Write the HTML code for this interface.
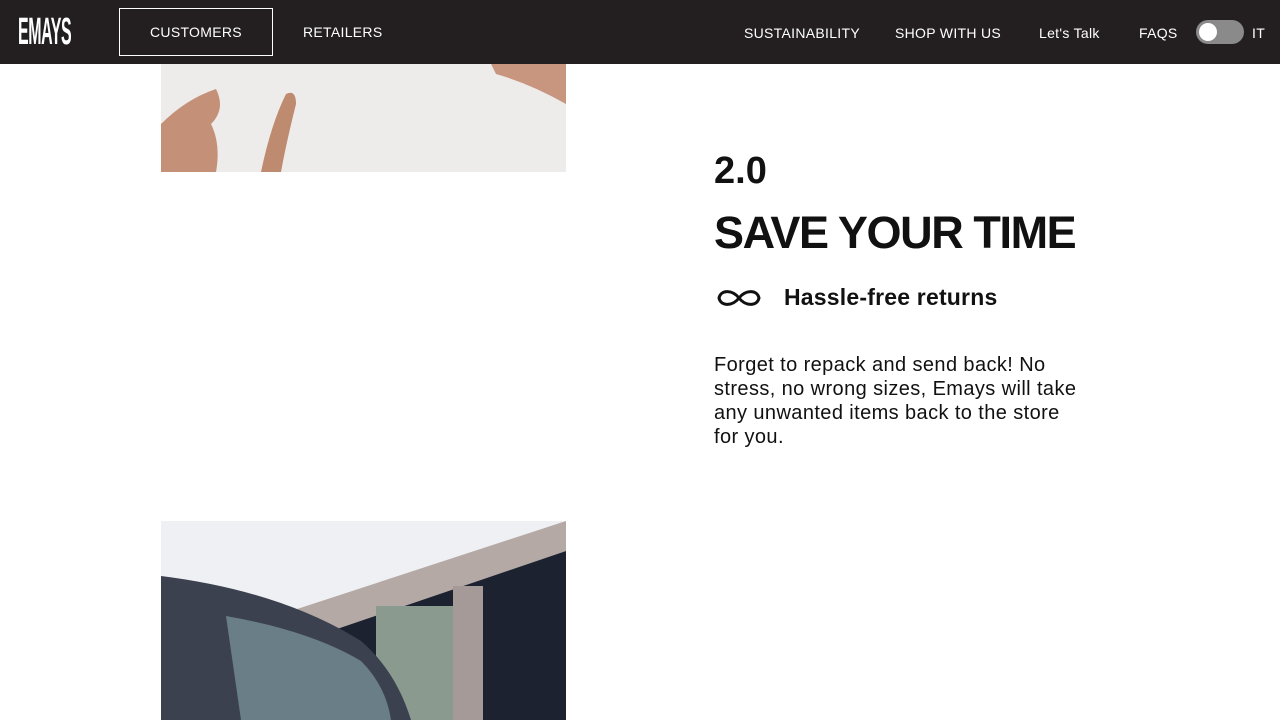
<!DOCTYPE html>
<html><head><meta charset="utf-8"><style>
*{margin:0;padding:0;box-sizing:border-box}
body{width:1280px;height:720px;overflow:hidden;background:#fff;font-family:"Liberation Sans",sans-serif;position:relative}
.nav{position:absolute;left:0;top:0;width:1280px;height:64px;background:#231f20;color:#fff}
.nav span{position:absolute;font-size:14px;top:24px;letter-spacing:0.3px}
.logo{position:absolute;left:18px;top:12px;font-size:38px;font-weight:bold;transform:scaleX(0.42);transform-origin:left;letter-spacing:-1px;line-height:40px}
.box{position:absolute;left:119px;top:8px;width:154px;height:48px;border:1px solid #fff}
.tog{position:absolute;left:1196px;top:20px;width:48px;height:24px;border-radius:12px;background:#8a8a8a}
.tog i{position:absolute;left:3px;top:3px;width:18px;height:18px;border-radius:50%;background:#fff}
.t{position:absolute;color:#111}
</style></head><body>
<div class="nav">
<div class="logo">EMAYS</div>
<div class="box"></div>
<span style="left:150px;top:24px">CUSTOMERS</span>
<span style="left:303px;top:24px">RETAILERS</span>
<span style="left:744px;top:25px">SUSTAINABILITY</span>
<span style="left:895px;top:25px">SHOP WITH US</span>
<span style="left:1039px;top:25px">Let's Talk</span>
<span style="left:1139px;top:25px">FAQS</span>
<div class="tog"><i></i></div>
<span style="left:1252px;top:25px">IT</span>
</div>
<svg style="position:absolute;left:161px;top:64px" width="405" height="108">
<rect width="405" height="108" fill="#eeecea"/>
<path d="M0 60 Q25 35 55 25 Q65 45 50 60 Q60 80 55 108 L0 108Z" fill="#c49077"/>
<path d="M100 108 Q110 60 125 30 Q135 25 135 40 Q125 80 120 108Z" fill="#be8a70"/>
<path d="M330 0 L405 0 L405 40 Q370 20 335 10Z" fill="#c8957f"/>
</svg>
<div class="t" style="left:714px;top:150px;font-size:38px;font-weight:bold">2.0</div>
<div class="t" style="left:714px;top:207px;font-size:45px;font-weight:bold;letter-spacing:-1.4px">SAVE YOUR TIME</div>
<svg style="position:absolute;left:716px;top:286px" width="46" height="24"><path d="M23 12 C17 4 5 3 3 12 C5 21 17 20 23 12 C29 4 41 3 43 12 C41 21 29 20 23 12Z" fill="none" stroke="#111" stroke-width="3"/></svg>
<div class="t" style="left:784px;top:284px;font-size:23px;font-weight:bold;letter-spacing:0.2px">Hassle-free returns</div>
<div class="t" style="left:714px;top:353px;font-size:20px;line-height:24px;width:372px;letter-spacing:0.4px">Forget to repack and send back! No stress, no wrong sizes, Emays will take any unwanted items back to the store for you.</div>
<svg style="position:absolute;left:161px;top:521px" width="405" height="199">
<rect width="405" height="199" fill="#eef0f3"/>
<path d="M130 90 L405 0 L405 30 L170 110Z" fill="#b5a9a6"/>
<path d="M170 110 L405 30 L405 199 L200 199Z" fill="#1c2230"/>
<rect x="215" y="85" width="80" height="114" fill="#8a9a8e"/>
<rect x="292" y="65" width="30" height="134" fill="#a59a98"/>
<path d="M0 55 Q120 70 200 120 Q235 150 250 199 L0 199Z" fill="#3c4150"/>
<path d="M65 95 Q150 110 200 140 Q225 165 230 199 L80 199Z" fill="#6a7e88"/>
</svg>
</body></html>
